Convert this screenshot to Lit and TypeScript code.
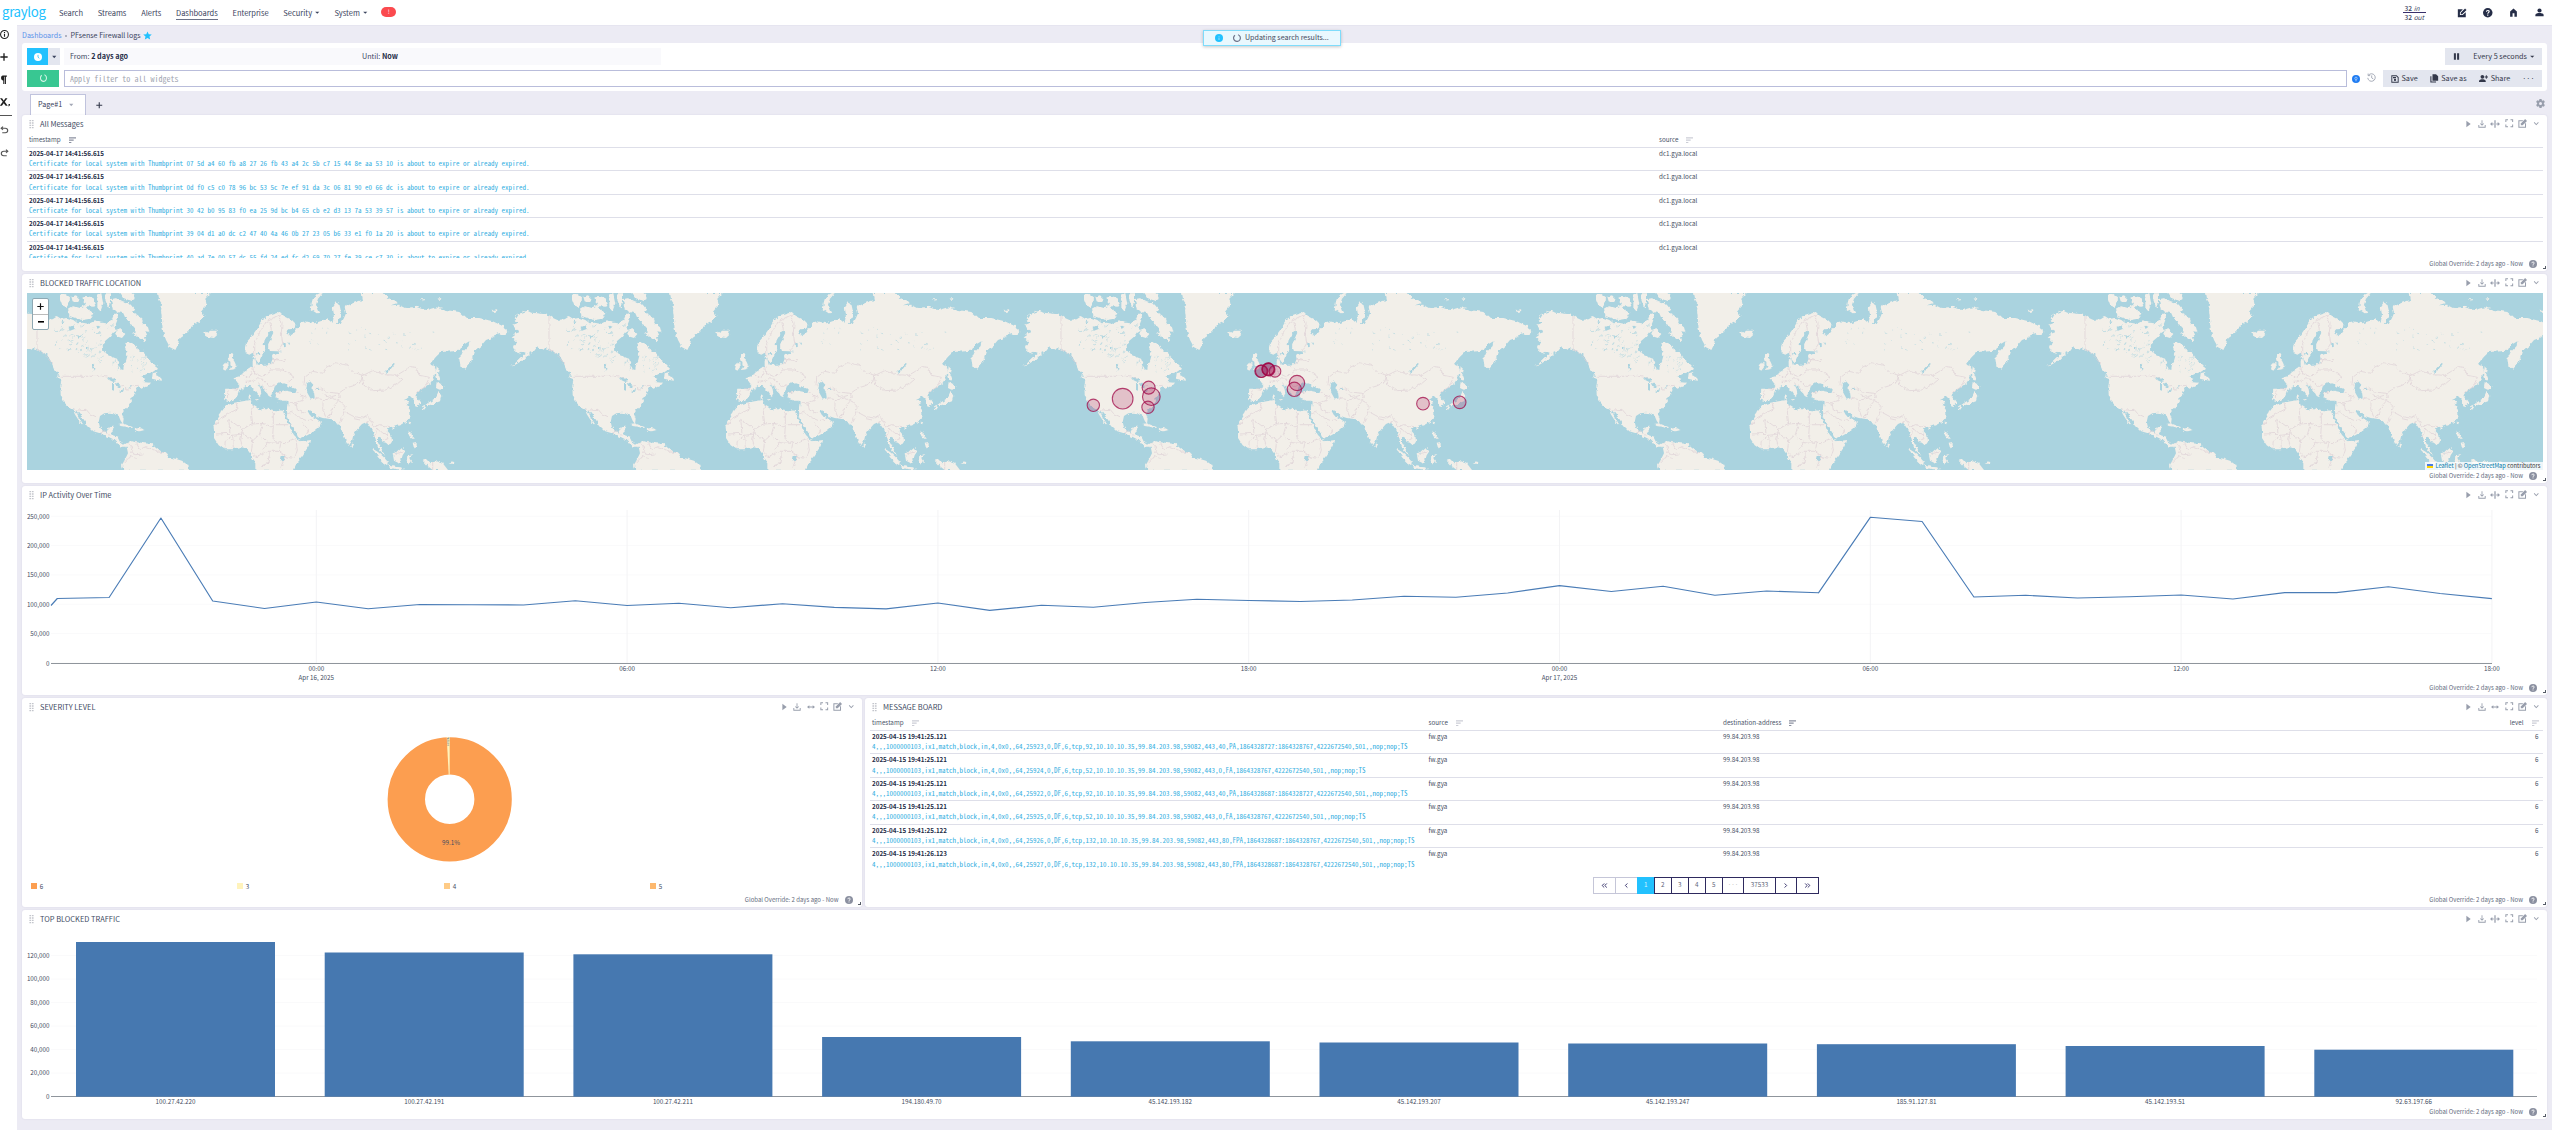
import { LitElement, html, svg, css, nothing } from "lit";
import { customElement, property } from "lit/decorators.js";

const shared = css`
  * { box-sizing: border-box; }
  svg { display: block; flex: none; overflow: visible; }
  .sp { flex: 1; }
`;

/* ---------- icons (24 unit grid) ---------- */
const ICONS: Record<string, unknown> = {
  play: svg`<path d="M5 2l16 10-16 10z"/>`,
  download: svg`<path d="M12 17l-6-6 1.600-1.600 3.100 3.200V1h2.600v11.600l3.100-3.200L18 11zM1 15h2.800v5h16.400v-5H23v8H1z"/>`,
  expandH: svg`<path d="M10.500 1h3v22h-3zM5.500 6v4.500h3.500v3H5.500V18L0 12zM18.500 6v4.500H15v3h3.500V18l5.500-6z"/>`,
  arrowsH: svg`<path d="M7 5v5.300h10V5l7 7-7 7v-5.300H7V19l-7-7z"/>`,
  full: svg`<path d="M1 1h7.500v2.800H3.800v4.700H1zM15.500 1H23v7.500h-2.800V3.800h-4.700zM1 15.500h2.800v4.700h4.700V23H1zM20.200 15.500H23V23h-7.500v-2.800h4.700z"/>`,
  edit: svg`<path d="M1 3h13l-2.600 2.700H3.700v15h15v-8l2.700-2.700V23H1z"/><path d="M7.500 16.500v-4.700L19 0l5 5-11.500 11.500z"/>`,
  editFill: svg`<path d="M2 3h12L7 10.500V17h6.500L21 10v12H2z"/><path d="M9 15v-3.500L19.300 1.200l3.500 3.500L12.500 15z"/>`,
  chevron: svg`<path d="M12 18L3 9l2.200-2.200L12 13.600l6.800-6.800L21 9z"/>`,
  caret: svg`<path d="M1 5h22L12 19z"/>`,
  home: svg`<path d="M3 23V9l9-8 9 8v14h-6.500v-9h-5v9z"/>`,
  person: svg`<circle cx="12" cy="6.500" r="5.500"/><path d="M1 22v-3.500c0-3.500 6-5 11-5s11 1.500 11 5V22z"/>`,
  save: svg`<path fill-rule="evenodd" d="M1 1h16l6 6v16H1zM3.800 3.800v16.400h16.400V8.200l-4.400-4.400zM6 6h9v4H6zM12 11.500a3.300 3.300 0 110 6.600 3.300 3.300 0 010-6.600z"/>`,
  copy: svg`<path d="M7 1h10l6 5v13H7z"/><path d="M1 6h3v15.500h13V24H1z"/>`,
  share: svg`<circle cx="9" cy="7.500" r="4.900"/><path d="M0 21.500V19c0-3.500 5-5 9-5s9 1.500 9 5v2.500zM18.300 3.500h2.500v3.400H24v2.500h-3.200v3.400h-2.500V9.400h-3.200V6.900h3.200z"/>`,
  gear: svg`<path fill-rule="evenodd" d="M9.200 0h5.600l.7 3.500 2 1.200 3.400-1.200 2.800 4.700-2.700 2.300v3l2.700 2.300-2.800 4.700-3.400-1.200-2 1.200-.7 3.500H9.200l-.7-3.500-2-1.200-3.400 1.200L.3 15.800 3 13.500v-3L.3 8.200l2.800-4.700 3.400 1.200 2-1.200zM12 8a4 4 0 100 8 4 4 0 000-8z"/>`,
  pause: svg`<path d="M3 1h7v22H3zM14 1h7v22h-7z"/>`,
  clock: svg`<circle cx="12" cy="12" r="12"/><path d="M12 5.500v7l4 3.500" fill="none" stroke="#22c1fe" stroke-width="2.400"/>`,
  star: svg`<path d="M12 1l3.300 7.500 8.100.8-6.100 5.400 1.800 8L12 18.500l-7.100 4.200 1.800-8L.6 9.300l8.100-.8z"/>`,
  sort: svg`<path d="M0 1h24v4.500H0zM0 9.500h16V14H0zM0 18h8v4.500H0z"/>`,
  history: svg`<path d="M4 6a10 10 0 11-2 7M3 1.500V7h5.500M12.500 6.500V13l4.500 3" fill="none" stroke="currentColor" stroke-width="2.300"/>`,
  spinner: svg`<path d="M15 2.200A10.300 10.300 0 1 1 6 3.600" fill="none" stroke="currentColor" stroke-width="3.600"/>`,
  plus: svg`<path d="M10 1h4v9h9v4h-9v9h-4v-9H1v-4h9z"/>`,
  infoO: svg`<circle cx="12" cy="12" r="10.500" fill="none" stroke="currentColor" stroke-width="2.800"/><path d="M10.500 5.500h3v3h-3zM10.500 10.500h3V18h-3z"/>`,
  info: svg`<circle cx="12" cy="12" r="12"/><path fill="#bdeeff" d="M11 6h2v2.400h-2zM11 10.300h2V18h-2z"/>`,
  help: svg`<circle cx="12" cy="12" r="12"/><path d="M8.600 9.500c0-4.500 7-4.300 7-.4 0 2.600-3.500 2.800-3.500 5.400M12 16.500v2.800" fill="none" stroke="#fff" stroke-width="2.800"/>`,
  bulb: svg`<circle cx="12" cy="12" r="12"/><path d="M8.500 9.800a3.500 3.500 0 017 0c0 2.200-1.700 2.400-1.700 4.400h-3.600c0-2-1.700-2.200-1.700-4.400zM10 17.300h4" fill="none" stroke="#cfe6ff" stroke-width="2"/>`,
  para: svg`<path d="M9 1h13v3.400h-3V24h-3.400V4.400h-1.800V24h-3.400v-9.500C1.500 14.500 1.500 1 9 1z"/>`,
  vars: svg`<path d="M0 1h5l4 7 4-7h5l-6.500 10.500L18.500 23h-5L9 15.500 4.600 23H-.4l7-11.500zM20.500 18H24v4l-2.500 3h-2l1.500-3.500h-.5z"/>`,
  undo: svg`<path d="M8 2L3 7l5 5M3.500 7H14a6.500 6.500 0 010 13H6" fill="none" stroke="currentColor" stroke-width="3"/>`,
  redo: svg`<path d="M16 2l5 5-5 5M20.500 7H10a6.500 6.500 0 000 13h8" fill="none" stroke="currentColor" stroke-width="3"/>`,
  drag: svg`<path d="M2 0h8v4H2zM14 0h8v4h-8zM2 7h8v4H2zM14 7h8v4h-8zM2 14h8v4H2zM14 14h8v4h-8zM2 21h8v4H2zM14 21h8v4h-8z"/>`,
  laquo: svg`<path d="M11 5l-7 7 7 7M20 5l-7 7 7 7" fill="none" stroke="currentColor" stroke-width="3.400"/>`,
  raquo: svg`<path d="M4 5l7 7-7 7M13 5l7 7-7 7" fill="none" stroke="currentColor" stroke-width="3.400"/>`,
  lsaquo: svg`<path d="M15 5l-7 7 7 7" fill="none" stroke="currentColor" stroke-width="3.400"/>`,
  rsaquo: svg`<path d="M9 5l7 7-7 7" fill="none" stroke="currentColor" stroke-width="3.400"/>`,
};
const icon = (name: string, w: number, h = w) =>
  html`<svg width=${w} height=${h} viewBox="0 0 24 24" preserveAspectRatio="none" fill="currentColor">${ICONS[name]}</svg>`;

/* ---------- widget frame ---------- */
@customElement("dash-widget")
class DashWidget extends LitElement {
  @property() heading = "";
  @property({ type: Boolean }) narrow = false;
  static styles = [shared, css`
    :host { display: flex; flex-direction: column; background: #fff; border-radius: 3px;
      box-shadow: 0 0 2px rgba(90, 90, 140, .12); padding: 0 4px 0 5px; height: 209px; min-width: 0; position: relative; }
    .head { height: 19px; flex: none; display: flex; align-items: center; padding: 0 0 1px 2px; color: #414b63; font-size: 7.450px; }
    .drag { color: #c3c5cc; margin-right: 6px; display: flex; }
    .tools { display: flex; color: #989eac; margin-top: -1px; }
    .tools span { width: 13.500px; height: 10px; display: flex; align-items: center; justify-content: center; }
    .body { flex: 1; min-height: 0; overflow: hidden; }
    .foot { height: 13px; flex: none; display: flex; align-items: center; justify-content: flex-end; gap: 6px;
      padding: 0 5.500px 2px 0; font-size: 6px; color: #646b7e; }
    .foot svg { color: #8b90a0; }
    .grip { position: absolute; right: 1px; bottom: 2px; width: 3px; height: 3px; border-right: 1px solid #555b66; border-bottom: 1px solid #555b66; }
  `];
  render() {
    return html`
      <div class="head"><span class="drag">${icon("drag", 5, 8)}</span>${this.heading}<span class="sp"></span>
        <div class="tools">
          <span>${icon("play", 6.500, 8)}</span><span>${icon("download", 8, 8)}</span>
          <span>${icon(this.narrow ? "arrowsH" : "expandH", this.narrow ? 8 : 10, this.narrow ? 6 : 8)}</span><span>${icon("full", 8.500, 8.500)}</span>
          <span>${icon("edit", 9, 9)}</span><span>${icon("chevron", 6.500, 7)}</span>
        </div>
      </div>
      <div class="body"><slot></slot></div>
      <div class="foot"><span>Global Override: 2 days ago - Now</span>${icon("help", 8)}</div>
      <div class="grip"></div>`;
  }
}

/* ---------- message table ---------- */
type Row = { ts: string; msg: string; cells: string[] };
@customElement("message-table")
class MessageTable extends LitElement {
  @property({ attribute: false }) columns: string[] = [];
  @property({ attribute: false }) rows: Row[] = [];
  @property() sorted = "";
  @property() template = "";
  static styles = [shared, css`
    :host { display: block; font-size: 6.270px; color: #454d62; }
    .row { display: grid; padding: 0 4px 0 2px; }
    .hd { height: 14px; align-items: center; border-bottom: 1px solid #dedfe9; }
    .hd span { display: flex; align-items: center; gap: 8px; color: #4d556a; height: 12px; }
    .hd svg { color: #cbcdd6; }
    .hd .on svg { color: #8b90a0; }
    .r { height: 23.400px; border-bottom: 1px solid #dedfe9; }
    .r:last-child { border: 0; }
    .line { display: block; height: 11px; line-height: 12px; white-space: nowrap; }
    .ts { font-weight: 700; color: #252d47; }
    .msg { grid-column: 1 / -1; font-family: "Noto Sans Mono CJK JP", "DejaVu Sans Mono", monospace; color: #35afdf; font-size: 7px; line-height: 9.400px; height: 11px; }
    .num { text-align: right; justify-content: flex-end; }
  `];
  render() {
    const st = `grid-template-columns:${this.template}`;
    const num = (i: number) => (this.columns[i] === "level" ? "num" : "");
    return html`
      <div class="row hd" style=${st}>${this.columns.map((c, i) => html`<span class="${c === this.sorted ? "on" : ""} ${num(i)}">${c}${icon("sort", 7, 6.500)}</span>`)}</div>
      ${this.rows.map((r) => html`<div class="row r" style=${st}>
        <span class="line ts">${r.ts}</span>${r.cells.map((c, i) => html`<span class="line ${num(i + 1)}">${c}</span>`)}
        <span class="line msg">${r.msg}</span></div>`)}`;
  }
}

/* ---------- world map ---------- */
const NA = "M50 88L60 72 72 68 88 62 100 68 118 70 135 72 153 76 165 84 178 90 200 88 215 78 228 86 245 84 262 90 275 100 290 98 310 102 330 92 345 98 362 100 378 92 386 72 394 70 396 84 392 96 385 112 392 120 380 128 372 140 358 152 350 166 352 182 362 194 378 200 392 206 398 222 404 238 412 240 414 222 420 212 424 198 420 182 417 168 424 156 436 160 452 168 456 180 462 186 472 182 478 198 488 208 502 220 512 230 512 238 500 246 482 252 464 262 478 266 470 276 492 278 484 288 466 296 458 288 450 300 446 312 436 322 438 334 428 348 414 362 408 372 413 386 411 402 404 392 398 378 385 370 370 368 355 370 342 378 338 396 342 412 350 424 362 426 368 412 384 410 380 424 376 434 394 440 402 456 414 464 424 458 434 452 446 456 475 460 496 462 510 474 522 484 540 490 548 502 568 506 588 512 604 524 606 542H412L408 524 416 510 426 490 422 470 408 470 396 462 386 450 370 442 356 436 342 430 322 424 306 408 298 396 288 380 274 362 268 362 278 380 292 404 286 402 276 388 266 372 262 360 250 354 238 344 230 326 224 312 223 290 226 268 216 250 206 240 196 216 184 196 168 184 152 178 140 174 128 180 120 168 108 184 95 190 80 206 56 222 40 230 75 198 86 190 72 184 60 190 50 180 45 168 58 158 50 150 40 140 55 130 66 126 52 118 46 104 62 98Z";
const EURASIA = "M718 330L716 312 718 296 740 296 757 298 760 284 748 270 740 262 752 258 766 254 774 246 788 238 800 228 800 212 808 206 812 224 840 224 854 222 860 206 858 198 870 190 890 186 872 184 852 183 846 168 852 150 862 128 856 122 846 134 836 150 833 164 838 178 830 194 822 212 814 216 806 202 800 188 790 194 780 190 776 176 780 158 796 140 812 118 828 92 850 74 876 66 895 78 918 90 932 104 924 116 906 118 902 128 912 136 922 128 930 116 942 112 940 98 958 94 985 100 1008 92 1024 84 1032 94 1040 98 1044 76 1040 50 1050 36 1060 42 1064 60 1062 80 1052 104 1064 102 1074 84 1080 70 1076 50 1090 44 1104 38 1128 30 1124 9H1190L1205 24 1225 30 1232 40 1214 46 1240 44 1260 54 1290 50 1310 58 1322 60 1350 52 1380 60 1420 66 1440 84 1480 84 1520 94 1550 108 1562 124 1556 132 1540 128 1526 134 1522 142 1500 150 1488 164 1468 180 1462 200 1452 220 1438 236 1424 230 1420 208 1430 186 1448 168 1450 154 1430 166 1420 182 1400 184 1365 186 1350 200 1332 222 1345 228 1350 240 1344 262 1334 278 1318 290 1304 300 1288 314 1296 324 1306 338 1294 348 1284 344 1284 330 1272 318 1262 326 1254 330 1270 334 1262 346 1272 360 1274 378 1262 394 1244 404 1224 412 1212 410 1202 420 1216 436 1218 452 1208 466 1200 458 1190 456 1184 444 1176 440 1176 458 1186 474 1192 488 1198 498 1184 484 1174 468 1168 444 1160 422 1150 408 1142 396 1128 402 1112 420 1102 436 1098 452 1088 468 1078 448 1068 424 1062 406 1048 398 1038 388 1010 384 992 378 975 364 962 358 972 376 990 386 1008 398 1004 408 985 424 960 438 940 446 932 430 916 404 902 372 906 352 908 338 904 332 888 332 875 328 868 318 872 308 884 306 900 302 930 308 932 298 912 290 896 280 890 284 880 276 868 284 862 302 858 308 856 322 848 318 840 304 828 290 818 284 824 298 826 310 820 322 812 308 800 296 790 288 780 288 768 296 758 304 752 320 742 332 730 334Z";
const AFRICA = "M745 338L770 334 794 330 800 346 810 352 825 362 835 354 862 360 890 362 900 385 912 410 922 432 934 448 945 454 972 450 968 468 950 496 930 520 920 542H808L808 520 796 504 792 490 780 474 762 472 740 478 715 478 698 466 684 444 684 420 682 404 696 380 712 358 722 346Z";
const ISLES = "M516 9L520 30 528 42 525 62 528 90 530 120 540 150 552 172 568 180 576 164 580 145 600 128 628 102 640 96 655 80 648 62 662 45 658 26 674 9ZM654 124L666 128 672 122 690 122 697 132 684 144 668 142 658 136ZM730 192L742 194 740 206 746 216 752 230 748 238 728 240 736 230 732 216 728 204ZM724 218L726 232 718 242 711 238 714 224ZM222 14L238 12 252 22 250 38 242 52 228 46 222 30ZM246 58L262 48 282 54 300 44 308 58 322 70 312 86 290 90 268 84 250 78ZM256 20L270 16 282 28 274 40 260 34ZM288 24L300 18 318 22 330 38 322 50 300 48ZM334 12L346 10 352 40 344 62 334 50ZM362 10L372 10 372 40 366 52 358 30ZM374 28L392 24 410 34 430 40 446 58 438 66 456 76 470 90 468 98 486 112 490 126 478 124 484 140 474 142 478 154 462 146 448 134 440 128 450 124 444 110 430 104 432 94 418 84 412 70 396 66 380 56ZM388 120L404 118 418 132 408 144 396 140 388 132ZM400 9L440 9 446 24 430 34 414 28ZM500 250L514 246 510 256 526 262 528 272 514 270 498 266ZM212 254L220 258 226 268 218 264ZM396 402L410 400 426 406 442 412 436 414 418 410 404 408ZM446 416L460 414 476 420 462 424 448 422ZM974 58L978 36 992 14 1002 9 1010 10 996 26 990 44 996 60 1004 68 992 70ZM1352 228L1358 238 1356 254 1362 262 1354 272 1350 250ZM1352 276L1368 286 1376 290 1362 300 1350 294ZM1358 302L1366 318 1362 334 1346 340 1330 346 1318 344 1334 334 1348 324 1354 312ZM1312 346L1320 352 1314 360 1308 352ZM1270 392L1276 394 1272 404 1268 400ZM1268 422L1276 424 1278 440 1284 446 1274 444 1268 434ZM1280 458L1292 456 1292 470 1284 474ZM1098 460L1104 466 1100 474 1096 468ZM1160 476L1176 486 1192 500 1206 516 1204 526 1192 518 1176 502ZM1204 526L1226 530 1244 532 1256 538 1230 538 1208 532ZM1220 490L1234 486 1248 474 1258 484 1250 496 1246 510 1236 518 1224 512ZM1264 496L1282 492 1270 502 1278 512 1270 526 1262 514ZM1310 512L1324 508 1334 520 1350 514 1372 522 1386 540H1340L1322 526ZM1388 520L1402 514 1400 522ZM788 318L794 316 794 326 788 326ZM806 328L818 328 816 334ZM0 98L14 112 28 122 24 134 10 136 0 130ZM1518 60L1530 58 1532 64 1520 66ZM1302 28L1316 28 1310 34ZM1354 26L1366 24 1364 30ZM1218 412L1226 414 1222 420ZM866 338L880 336 876 340ZM800 200L806 198 806 206 800 206Z";
const WATER = "M960 282L972 274 982 284 976 294 984 306 986 322 974 326 966 312 958 296ZM988 294L1000 292 1000 300 990 300ZM1198 246L1210 232 1224 218 1226 222 1212 240 1202 248ZM884 498L896 498 898 506 890 514 882 506ZM362 266L378 262 394 272 382 276ZM378 282L384 280 384 302 378 300ZM390 278L404 284 402 296 394 292ZM400 302L418 296 416 300 402 306ZM424 292L438 288 436 292ZM248 112L262 106 268 116 252 122ZM270 140L288 132 278 146ZM300 172L308 170 306 186ZM318 218L326 226 324 242 318 232ZM890 164L898 160 900 170 894 172ZM906 158L912 158 910 166ZM810 190L818 188 820 194 812 196ZM330 104L346 112 334 116ZM226 92L240 96 228 100Z";
const BORDERS = "M153 76V176L168 184 184 204 200 222M226 259H350L366 262 378 264M406 284L424 300 440 288 458 286M258 356L278 360 300 358 312 372 330 380M342 430L356 422 372 436M424 458L440 474 434 488 452 494 470 492M450 458L462 478 480 470 500 478M500 478L516 486 540 488M412 520L432 500 452 506M806 200L806 160 820 130 840 96 860 86 880 76M856 122L852 96M880 76L888 100 886 130 890 160 876 184M854 222L872 206 892 214 900 208M858 208L878 210M840 226L856 240 890 240 912 252 924 262 908 276M768 254L782 262 792 262 796 244M782 262L780 278 800 272 812 266 830 268 840 280 854 290 868 284M800 230L804 250 824 258 840 256 856 240M816 278L830 288 842 300M726 300L724 326M756 298L742 296M884 306L868 310M930 304L948 316 948 332 928 338 908 338M948 316L962 322M930 338L934 360 962 372M902 372L920 366 934 380 962 392 984 388M950 400L968 420 960 436M986 324L1012 330 1010 356 1020 384M1012 330L1040 324 1058 332 1040 352 1036 372 1022 384M1062 334L1078 350 1070 380 1060 400M1078 366L1104 380 1128 384 1146 374 1156 392 1142 398M1104 386L1122 390M1156 392L1164 412 1180 404 1200 408 1212 410M1168 440L1172 414 1188 430 1204 432 1206 446 1190 452M954 286L956 262 980 244 1010 250 1020 232 1050 218 1084 226 1104 248 1130 256 1124 276 1100 288 1080 294 1058 310 1020 306 996 290 986 300M1058 310L1062 334M1010 312L1030 322 1050 316M1132 256L1160 242 1196 254 1232 256 1250 268 1236 280 1200 300 1160 302 1134 286 1128 258M1232 256L1252 244 1272 230 1290 232 1300 256 1330 262 1318 290 1290 308M750 338L756 356 700 386M700 386L696 400H684M728 388L732 430 690 432M728 388L770 418 796 402 830 400 862 412M800 346L796 368 800 402M862 360V404H916M862 404L860 440 870 456 900 458 930 448M830 400L820 434 800 452 770 432 740 436 718 452M770 418L764 450 770 472M740 436L742 476M718 452L716 476M800 452L796 486 810 500 846 484 880 484 900 500M824 438L846 458 880 460M846 458L830 478M880 484L884 460M930 450L934 480 926 506 900 500 884 530M850 490L846 520 820 530M1340 516V540M1226 492L1250 486";

const lakes = (() => {
  let s = 7;
  const rnd = () => ((s = (s * 16807) % 2147483647) / 2147483647);
  let d = "";
  for (let i = 0; i < 90; i++) {
    const t = rnd();
    const x = 205 + t * 190, y = 104 + rnd() * 135 * (0.5 + t * 0.5), l = 2 + rnd() * 8;
    if (x > 345 && y > 140 && y < 210) continue;
    d += `M${x.toFixed(0)} ${y.toFixed(0)}l${l.toFixed(1)} ${(-l * rnd()).toFixed(1)}`;
  }
  for (let i = 0; i < 26; i++) d += `M${(430 + rnd() * 50).toFixed(0)} ${(200 + rnd() * 45).toFixed(0)}l3 -2`;
  for (let i = 0; i < 40; i++) d += `M${(960 + rnd() * 380).toFixed(0)} ${(110 + rnd() * 80).toFixed(0)}l${(2 + rnd() * 4).toFixed(1)} 1`;
  return d;
})();

const HITS = [[250, 346, 18.5], [338, 326, 31], [416, 293, 19.5], [424, 320, 26.5], [414, 352, 18.5], [753, 244, 18.5], [755, 244, 18.5],
  [795, 244, 17.5], [774, 238, 18.5], [776, 239, 19], [775, 237, 18.5], [861, 279, 23], [853, 298, 21.5], [1239, 341, 19], [1349, 337, 19]];

@customElement("geo-map")
class GeoMap extends LitElement {
  static styles = [shared, css`
    :host { display: block; position: relative; height: 177px; background: #aad3df; overflow: hidden; }
    .zoom { position: absolute; left: 5px; top: 5px; width: 17px; border: 1px solid #8fa9b4; border-radius: 2px; background: #fff; }
    .zoom div { height: 14.500px; display: flex; align-items: center; justify-content: center; color: #111; }
    .zoom div + div { border-top: 1px solid #bbb; height: 15px; }
    .attr { position: absolute; right: 0; bottom: 0; height: 8px; display: flex; align-items: center; gap: 2px; padding: 0 2px 0 2px;
      background: rgba(255, 255, 255, .8); font-size: 5.750px; color: #333; white-space: pre; }
    .attr b { font-weight: 400; color: #0078a8; }
    .flag { width: 6px; height: 4px; background: linear-gradient(#4c7be1 50%, #ffd500 50%); }
  `];
  render() {
    return html`
      <svg width="2516" height="177" viewBox="0 0 2516 177">
        <defs>
          <filter id="coast" x="-40" y="0" width="1620" height="560" filterUnits="userSpaceOnUse" color-interpolation-filters="sRGB">
            <feTurbulence type="fractalNoise" baseFrequency="0.09" numOctaves="2" seed="4" result="n"/>
            <feDisplacementMap in="SourceGraphic" in2="n" scale="12" xChannelSelector="R" yChannelSelector="G"/>
          </filter>
          <g id="world">
            <g filter="url(#coast)">
              <path d="${NA}${EURASIA}${AFRICA}${ISLES}" fill="#f2efe9"/>
              <path d=${WATER} fill="#aad3df"/>
              <path d=${lakes} stroke="#b4d7e0" stroke-width="2.200" fill="none"/>
              <path d=${BORDERS} stroke="#dccfd4" stroke-width="2" fill="none"/>
            </g>
          </g>
        </defs>
        ${[-2, -1, 0, 1, 2, 3].map((k) => svg`<use href="#world" transform="translate(${983 + 512 * k} -3) scale(.33333)"/>`)}
        <g transform="translate(983 -3) scale(.33333)" fill="rgba(166,10,76,.2)" stroke="rgba(160,10,72,.75)" stroke-width="3.300">
          ${HITS.map(([x, y, r]) => svg`<circle cx=${x} cy=${y} r=${r}/>`)}
        </g>
      </svg>
      <div class="zoom"><div>${icon("plus", 7)}</div><div><svg width="6" height="2"><path d="M0 0h6v1.600H0z"/></svg></div></div>
      <div class="attr"><span class="flag"></span><span><b>Leaflet</b> | © <b>OpenStreetMap</b> contributors</span></div>`;
  }
}

/* ---------- charts ---------- */
const chartCss = css`
  :host { display: block; }
  text { font-size: 6.270px; fill: #444c61; }
  .end { text-anchor: end; }
  .mid { text-anchor: middle; }
  .tiny { font-size: 2.500px; }
`;

@customElement("line-chart")
class LineChart extends LitElement {
  static styles = [shared, chartCss];
  render() {
    const ys = [598.5, 597.5, 518, 601, 608.5, 602, 608.8, 604.5, 604.7, 605, 600.8, 605.5, 603.2, 607.7, 603.8, 607.4, 608.9,
      603, 610.4, 605.3, 607.3, 602.5, 599.3, 600.5, 601.5, 600, 596.2, 597.2, 593, 585.6, 591.5, 586.3, 595.2, 591, 592.8, 517.3, 521.5,
      597, 595.3, 598, 596.8, 595, 599, 592.6, 592.6, 586.8, 593.5, 598.6];
    const pts = ["51,605.5", ...ys.map((y, i) => `${(57.3 + i * 51.8).toFixed(1)},${y}`)].join(" ");
    const ticks = ["00:00", "06:00", "12:00", "18:00", "00:00", "06:00", "12:00", "18:00"];
    return html`<svg width="2516" height="177" viewBox="27 505 2516 177">
      ${[250, 200, 150, 100, 50, 0].map((v) => svg`
        <path d="M51 ${663 - v * 0.5872}H2492" stroke="#fafafb"/>
        <text class="end" x="49.500" y=${665.5 - v * 0.5872}>${v ? `${v},000` : "0"}</text>`)}
      ${ticks.map((t, i) => svg`<path d="M${316.3 + i * 310.8} 510V663" stroke="#f3f3f5"/><text class="mid" x=${316.3 + i * 310.8} y="671">${t}</text>`)}
      <text class="mid" x="316.300" y="680">Apr 16, 2025</text><text class="mid" x="1559.500" y="680">Apr 17, 2025</text>
      <path d="M51 663.500H2492" stroke="#8f959c"/>
      <polyline points=${pts} fill="none" stroke="#4a7cb6" stroke-width="1.150" stroke-linejoin="round"/>
    </svg>`;
  }
}

@customElement("bar-chart")
class BarChart extends LitElement {
  static styles = [shared, chartCss];
  render() {
    const bars: [string, number][] = [["100.27.42.220", 942], ["100.27.42.191", 952.5], ["100.27.42.211", 954.3], ["194.180.49.70", 1037],
      ["45.142.193.182", 1041.3], ["45.142.193.207", 1042.5], ["45.142.193.247", 1043.5], ["185.91.127.81", 1044.2], ["45.142.193.51", 1046], ["92.63.197.66", 1049.7]];
    return html`<svg width="2516" height="177" viewBox="27 929 2516 177">
      ${[120, 100, 80, 60, 40, 20, 0].map((v) => svg`
        <path d="M51 ${1096.5 - v * 1.175}H2537" stroke="#fafafb"/>
        <text class="end" x="49.500" y=${1098.7 - v * 1.175}>${v ? `${v},000` : "0"}</text>`)}
      <path d="M51 1096.500H2537" stroke="#8f959c"/>
      ${bars.map(([l, y], i) => svg`<rect x=${76 + i * 248.7} y=${y} width="199" height=${1096.7 - y} fill="#4678b0"/>
        <text class="mid" x=${175.5 + i * 248.7} y="1104">${l}</text>`)}
    </svg>`;
  }
}

@customElement("pie-chart")
class PieChart extends LitElement {
  static styles = [shared, chartCss];
  render() {
    const legend: [string, string, number][] = [["6", "#fc9e50", 31], ["3", "#fff3bc", 237], ["4", "#fecb86", 444], ["5", "#fdb86d", 650]];
    return html`<svg width="831" height="177" viewBox="27 717 831 177">
      <circle cx="449.700" cy="799.300" r="43.400" fill="none" stroke="#fc9e50" stroke-width="37.400"/>
      <path d="M449.700 737.100h-3l2 37.600h1z" fill="#fff3bc"/>
      <text class="tiny" transform="translate(449 746) rotate(-90)">0.872%</text>
      <text class="mid" x="451" y="845">99.1%</text>
      ${legend.map(([t, c, x]) => svg`<rect x=${x} y="883" width="6" height="6" fill=${c}/><text x=${x + 8.7} y="888.500">${t}</text>`)}
    </svg>`;
  }
}

/* ---------- data ---------- */
const cert = (h: string) => ({ ts: "2025-04-17 14:41:56.615", msg: `Certificate for local system with Thumbprint ${h} is about to expire or already expired.`, cells: ["dc1.gya.local"] });
const CERTS = [
  "07 5d a4 60 fb a8 27 26 fb 43 a4 2c 5b c7 15 44 8e aa 53 10",
  "0d f0 c5 c0 78 96 bc 53 5c 7e ef 91 da 3c 06 81 90 e0 66 dc",
  "30 42 b0 95 83 f0 ea 25 9d bc b4 65 cb e2 d3 13 7a 53 39 57",
  "39 04 d1 a0 dc c2 47 40 4a 46 0b 27 23 05 b6 33 e1 f0 1a 20",
  "40 ad 7e 00 57 dc 55 fd 24 ed fc d2 69 70 27 fe 39 ce c7 30",
].map(cert);
const fw = (ts: string, id: string, tail: string) => ({ ts: `2025-04-15 19:41:${ts}`, msg: `4,,,1000000103,ix1,match,block,in,4,0x0,,64,${id},0,DF,6,tcp,${tail},4222672540,501,,nop;nop;TS`, cells: ["fw.gya", "99.84.203.98", "6"] });
const ip = "10.10.10.35,99.84.203.98,59082,443";
const FW = [
  fw("25.121", "25923", `92,${ip},40,PA,1864328727:1864328767`),
  fw("25.121", "25924", `52,${ip},0,FA,1864328767`),
  fw("25.121", "25922", `92,${ip},40,PA,1864328687:1864328727`),
  fw("25.121", "25925", `52,${ip},0,FA,1864328767`),
  fw("25.122", "25926", `132,${ip},80,FPA,1864328687:1864328767`),
  fw("26.123", "25927", `132,${ip},80,FPA,1864328687:1864328767`),
];
const nav = (n: string) => icon(n, 7);
const PAGES: [unknown, number, string][] = [[nav("laquo"), 23, "off"], [nav("lsaquo"), 23, "off"], ["1", 18, "act"], ["2", 18, ""], ["3", 18, ""],
  ["4", 18, ""], ["5", 18, ""], ["···", 22.5, "dim"], ["37533", 32.5, ""], [nav("rsaquo"), 22, ""], [nav("raquo"), 23, ""]];

/* ---------- application ---------- */
@customElement("app-root")
class AppRoot extends LitElement {
  static styles = [shared, css`
    :host { display: flex; flex-direction: column; width: 2552px; height: 1130px; background: #ecebf4; overflow: hidden; position: relative;
      font-family: "Noto Sans CJK JP", "Noto Sans", sans-serif; font-size: 7.200px; color: #3c4560; line-height: 1; white-space: nowrap; }
    .nav { height: 25px; flex: none; background: #fff; display: flex; align-items: center; padding: 0 8.500px 0 2px; font-size: 7.500px; color: #3a435d; }
    .logo { width: 57px; color: #22c1fe; font-size: 13.300px; letter-spacing: -.35px; line-height: 15px; margin-top: -3px; }
    .nav .l { margin-right: 14.800px; display: flex; align-items: center; gap: 3px; height: 14px; border-bottom: 1px solid transparent; padding-top: 1px; }
    .nav .l.on { border-color: #6a7187; }
    .badge { width: 15px; height: 10px; border-radius: 5px; background: #fb4a4e; color: #fff; display: flex; align-items: center; justify-content: center; font-size: 6px; margin-left: -1px; margin-top: -1px; }
    .io { width: 23px; display: flex; flex-direction: column; font-size: 6.600px; margin-right: 31px; }
    .io span { height: 8px; line-height: 8px; padding-left: 1.500px; }
    .io span:first-child { border-bottom: 1px solid #39306b; height: 9px; }
    .io b { font-weight: 500; }
    .ric { display: flex; gap: 16.300px; color: #252d47; }
    .main { flex: 1; display: flex; min-height: 0; }
    .side { width: 17px; background: #fff; display: flex; flex-direction: column; align-items: flex-start; color: #1f1f1f; flex: none; margin-top: -2px; }
    .side span { height: 22.500px; display: flex; align-items: center; width: 12px; margin-left: -.5px; }
    .side .sep { height: 1px; width: 12px; background: #555; margin: 2px 0 3px; }
    .side .dim { color: #555; }
    .content { flex: 1; min-width: 0; padding: 0 5.500px 0 5px; display: flex; flex-direction: column; border-top: 1px solid #e6e5f0; }
    .crumb { height: 17px; flex: none; display: flex; align-items: center; gap: 3.500px; padding-top: 2px; font-size: 7.100px; color: #3a435d; }
    .crumb b { font-weight: 400; color: #5a92ea; }
    .crumb i { width: 2px; height: 2px; border-radius: 1px; background: #9a9fb0; }
    .crumb svg { color: #22c1fe; margin-left: -1px; }
    .card { height: 48px; flex: none; background: #fff; border-radius: 3px; padding: 5px 5px 4px; display: flex; flex-direction: column; gap: 5px; }
    .bar { display: flex; height: 17px; align-items: center; }
    .time { width: 21px; height: 17px; background: #22c1fe; color: #fff; display: flex; align-items: center; justify-content: center; }
    .drop { width: 12px; height: 17px; background: #e3e6ef; display: flex; align-items: center; justify-content: center; margin-right: 4px; }
    .range { width: 597px; height: 17px; background: #f9f9fc; display: flex; align-items: center; padding-left: 6px; }
    .range span { width: 292px; }
    .range b { font-weight: 700; color: #252d47; }
    .btns { height: 17px; background: #e3e6ef; display: flex; align-items: center; color: #33384a; font-size: 7.250px; }
    .btns span { display: flex; align-items: center; gap: 3px; }
    .auto { width: 97px; justify-content: space-between; padding: 0 7px 0 8px; }
    .acts { width: 159px; justify-content: space-between; padding: 0 7px 0 8px; }
    .go { width: 32px; height: 17px; background: #38c792; color: #d3f3e6; display: flex; align-items: center; justify-content: center; padding-bottom: 1px; margin-right: 5px; }
    .query { flex: 1; height: 17px; border: 1px solid #b9bddb; display: flex; align-items: center; padding: 1px 0 0 5px; color: #a1a5b1;
      font: 8.060px "Noto Sans Mono CJK JP", "DejaVu Sans Mono", monospace; line-height: 1; margin-right: 4.500px; }
    .bulb { color: #1f7cf2; }
    .hist { color: #9aa0ae; margin: -2px 7px 0 7px; }
    .tabs { height: 24px; flex: none; display: flex; padding: 3px 2px 0 8px; }
    .tab { width: 56px; border: 1px solid #c0c3dd; border-bottom: 0; background: #fff; display: flex; align-items: center; gap: 7px; padding-left: 7px; color: #3a435d; }
    .tab svg { color: #a3a8b6; }
    .add { margin: 7.500px 0 0 10px; color: #33384a; }
    .gear { margin-top: 5px; color: #989eac; }
    .grid { display: flex; flex-direction: column; gap: 3px; }
    .all { height: 156px; }
    .pair { display: grid; grid-template-columns: 840px 1fr; gap: 3px; }
    .pages { display: flex; height: 17px; justify-content: center; font-size: 6.300px; color: #5d6478; margin-top: 5.500px; }
    .pages span { border: 1px solid #2e2a5e; margin-left: -1px; display: flex; align-items: center; justify-content: center; }
    .pages svg { color: #3f3b70; }
    .pages .off { border-color: #c5c6d8; }
    .pages .act { background: #22c1fe; border-color: #22c1fe; color: #d8f4ff; }
    .pages .dim { color: #aaa; }
    .toast { position: absolute; left: 1203px; top: 30px; width: 138px; height: 16px; border: 1px solid #7fdcfb; background: #e9f8fe; box-shadow: 0 1px 3px rgba(0, 0, 0, .22);
      display: flex; align-items: center; padding-left: 11px; font-size: 7.100px; color: #454b60; }
    .toast .i { color: #22c1fe; margin-right: 10px; }
    .toast .s { color: #6e748a; margin-right: 4px; }
  `];
  render() {
    const caret = icon("caret", 4.5, 3.5);
    return html`
      <div class="nav">
        <span class="logo">graylog</span>
        <span class="l">Search</span><span class="l">Streams</span><span class="l">Alerts</span><span class="l on">Dashboards</span>
        <span class="l">Enterprise</span><span class="l">Security ${caret}</span><span class="l">System ${caret}</span><span class="badge">!</span>
        <span class="sp"></span>
        <div class="io"><span><b>32</b> <i>in</i></span><span><b>32</b> <i>out</i></span></div>
        <div class="ric">${icon("editFill", 10)}${icon("help", 9.5)}${icon("home", 9)}${icon("person", 9)}</div>
      </div>
      <div class="main">
        <div class="side">
          <span>${icon("infoO", 9)}</span><span>${icon("plus", 8)}</span><span>${icon("para", 7.500, 9)}</span><span>${icon("vars", 10, 8)}</span>
          <div class="sep"></div>
          <span class="dim">${icon("undo", 9, 8)}</span><span class="dim">${icon("redo", 9, 8)}</span>
        </div>
        <div class="content">
          <div class="crumb"><b>Dashboards</b><i></i><span>PFsense Firewall logs</span>${icon("star", 9)}</div>
          <div class="card">
            <div class="bar">
              <div class="time">${icon("clock", 8)}</div><div class="drop">${icon("caret", 4.500, 4)}</div>
              <div class="range"><span>From: <b>2 days ago</b></span><span>Until: <b>Now</b></span></div><span class="sp"></span>
              <div class="btns auto"><span>${icon("pause", 7, 7)}</span><span>Every 5 seconds ${icon("caret", 4.5, 3.5)}</span></div>
            </div>
            <div class="bar">
              <div class="go">${icon("spinner", 7, 8)}</div>
              <div class="query">Apply filter to all widgets</div>
              <span class="bulb">${icon("bulb", 8)}</span><span class="hist">${icon("history", 9)}</span>
              <div class="btns acts">
                <span>${icon("save", 8)}Save</span><span>${icon("copy", 8.500)}Save as</span><span>${icon("share", 9)}Share</span><span>···</span></div>
            </div>
          </div>
          <div class="tabs"><div class="tab">Page#1 ${icon("caret", 4.500, 4)}</div><div class="add">${icon("plus", 6.500)}</div><span class="sp"></span><div class="gear">${icon("gear", 9)}</div></div>
          <div class="grid">
            <dash-widget class="all" heading="All Messages">
              <message-table .columns=${["timestamp", "source"]} .rows=${CERTS} sorted="timestamp" template="1630px 1fr"></message-table>
            </dash-widget>
            <dash-widget heading="BLOCKED TRAFFIC LOCATION"><geo-map></geo-map></dash-widget>
            <dash-widget heading="IP Activity Over Time"><line-chart></line-chart></dash-widget>
            <div class="pair">
              <dash-widget narrow heading="SEVERITY LEVEL"><pie-chart></pie-chart></dash-widget>
              <dash-widget narrow heading="MESSAGE BOARD">
                <message-table .columns=${["timestamp", "source", "destination-address", "level"]} .rows=${FW} sorted="destination-address" template="556.500px 294.500px 1fr 60px"></message-table>
                <div class="pages">${PAGES.map(([t, w, c]) => html`<span class=${c || nothing} style="width:${w}px">${t}</span>`)}</div>
              </dash-widget>
            </div>
            <dash-widget heading="TOP BLOCKED TRAFFIC"><bar-chart></bar-chart></dash-widget>
          </div>
        </div>
      </div>
      <div class="toast"><span class="i">${icon("info", 8)}</span><span class="s">${icon("spinner", 8)}</span>Updating search results...</div>`;
  }
}
